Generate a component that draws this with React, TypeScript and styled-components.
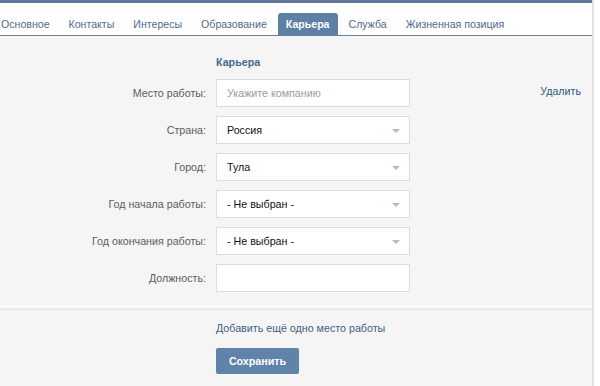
import React from "react";
import styled, { createGlobalStyle } from "styled-components";

const Global = createGlobalStyle`
  html, body { margin: 0; padding: 0; background: #fff; }
  body { font-family: "Liberation Sans", Arial, sans-serif; }
  * { box-sizing: border-box; }
`;

const Page = styled.div`
  width: 594px;
  height: 386px;
  border-right: 2px solid #e3e3e3;
  display: flex;
  flex-direction: column;
  overflow: hidden;
  font-family: "Liberation Sans", Arial, sans-serif;
  font-size: 10.7px;
`;

const TopBar = styled.div`
  height: 3px;
  background: #60799a;
  flex-shrink: 0;
`;

const TabBar = styled.div`
  height: 33px;
  background: #fff;
  border-bottom: 1px solid #6a7f98;
  display: flex;
  align-items: flex-end;
  flex-shrink: 0;
`;

const Tabs = styled.div`
  display: flex;
  align-items: flex-end;
  margin-left: -7px;
  gap: 3px;
`;

const Tab = styled.div<{ $active?: boolean }>`
  height: 22px;
  padding: 0 8px;
  display: flex;
  align-items: center;
  border-radius: 3px 3px 0 0;
  font-size: 10.6px;
  color: ${(p) => (p.$active ? "#fff" : "#50698a")};
  background: ${(p) => (p.$active ? "#5e80a5" : "transparent")};
  font-weight: ${(p) => (p.$active ? "bold" : "normal")};
`;

const Body = styled.div`
  flex: 1;
  background: #f5f5f5;
  display: flex;
  flex-direction: column;
`;

const FormSection = styled.div`
  padding: 19px 11px 14px 0;
  display: grid;
  grid-template-columns: 206px 194px 1fr;
  column-gap: 10px;
  row-gap: 9px;
  align-items: center;
`;

const Title = styled.div`
  grid-column: 2;
  font-weight: bold;
  color: #45688e;
  font-size: 10.7px;
  line-height: 14px;
  margin-bottom: 1px;
`;

const Label = styled.div`
  grid-column: 1;
  text-align: right;
  color: #5c5c5c;
  font-size: 10.7px;
`;

const Field = styled.div<{ $select?: boolean }>`
  grid-column: 2;
  height: 28px;
  background: #fff;
  border: 1px solid #d8dde3;
  display: flex;
  align-items: center;
  padding: 0 10px;
  font-size: 10.7px;
  color: #111;
  position: relative;
`;

const Placeholder = styled.span`
  color: #9a9a9a;
`;

const Arrow = styled.span`
  position: absolute;
  right: 9px;
  top: 12px;
  width: 0;
  height: 0;
  border-left: 4px solid transparent;
  border-right: 4px solid transparent;
  border-top: 4px solid #b4bcc6;
`;

const DeleteLink = styled.div`
  grid-column: 3;
  justify-self: end;
  color: #2b587a;
  font-size: 10.7px;
  margin-top: -4px;
`;

const Separator = styled.div`
  border-top: 1px solid #fff;
  border-bottom: 1px solid #e2e2e2;
  height: 4px;
  background: #f2f2f2;
`;

const Footer = styled.div`
  padding: 12px 0 0 216px;
  display: flex;
  flex-direction: column;
  align-items: flex-start;
  gap: 14px;
`;

const AddLink = styled.div`
  color: #3f5f80;
  font-size: 10.7px;
`;

const SaveButton = styled.button`
  width: 83px;
  height: 26px;
  border: none;
  border-radius: 2px;
  background: #6083a9;
  color: #fff;
  font-weight: bold;
  font-family: "Liberation Sans", Arial, sans-serif;
  font-size: 10.7px;
  padding: 0;
`;

const tabs = [
  "Основное",
  "Контакты",
  "Интересы",
  "Образование",
  "Карьера",
  "Служба",
  "Жизненная позиция",
];

const rows: { label: string; value?: string; placeholder?: string; select?: boolean }[] = [
  { label: "Место работы:", placeholder: "Укажите компанию" },
  { label: "Страна:", value: "Россия", select: true },
  { label: "Город:", value: "Тула", select: true },
  { label: "Год начала работы:", value: "- Не выбран -", select: true },
  { label: "Год окончания работы:", value: "- Не выбран -", select: true },
  { label: "Должность:" },
];

export default function App() {
  return (
    <Page>
      <Global />
      <TopBar />
      <TabBar>
        <Tabs>
          {tabs.map((t) => (
            <Tab key={t} $active={t === "Карьера"}>
              {t}
            </Tab>
          ))}
        </Tabs>
      </TabBar>
      <Body>
        <FormSection>
          <Title>Карьера</Title>
          {rows.map((r, i) => (
            <React.Fragment key={r.label}>
              <Label>{r.label}</Label>
              <Field $select={r.select}>
                {r.placeholder ? <Placeholder>{r.placeholder}</Placeholder> : r.value}
                {r.select && <Arrow />}
              </Field>
              {i === 0 && <DeleteLink>Удалить</DeleteLink>}
            </React.Fragment>
          ))}
        </FormSection>
        <Separator />
        <Footer>
          <AddLink>Добавить ещё одно место работы</AddLink>
          <SaveButton>Сохранить</SaveButton>
        </Footer>
      </Body>
    </Page>
  );
}
